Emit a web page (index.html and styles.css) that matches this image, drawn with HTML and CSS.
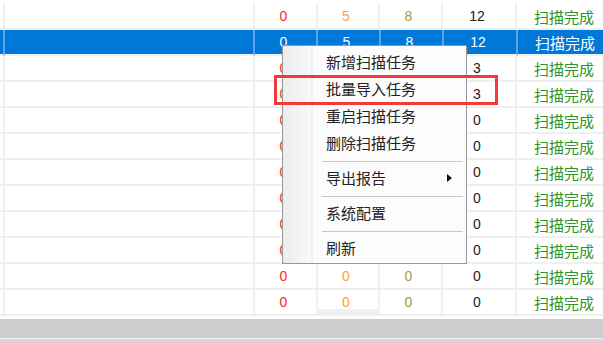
FILE: index.html
```html
<!DOCTYPE html>
<html lang="zh-CN">
<head>
    <meta charset="UTF-8">
    <title>扫描任务</title>
    <link rel="stylesheet" href="styles.css">
</head>
<body>

    <div class="grid">
        <div class="row">
            <div class="cell pre"></div><div class="cell name"></div>
            <div class="cell num red">0</div><div class="cell num orange">5</div><div class="cell num olive">8</div><div class="cell total">12</div>
            <div class="cell status">扫描完成</div>
        </div>
        <div class="row selected">
            <div class="cell pre"></div><div class="cell name"></div>
            <div class="cell num">0</div><div class="cell num">5</div><div class="cell num">8</div><div class="cell total">12</div>
            <div class="cell status">扫描完成</div>
        </div>
        <!-- rows under the context menu: middle columns are hidden -->
        <div class="row">
            <div class="cell pre"></div><div class="cell name"></div>
            <div class="cell num red">0</div><div class="cell num orange"></div><div class="cell num olive"></div><div class="cell total">3</div>
            <div class="cell status">扫描完成</div>
        </div>
        <div class="row">
            <div class="cell pre"></div><div class="cell name"></div>
            <div class="cell num red">0</div><div class="cell num orange"></div><div class="cell num olive"></div><div class="cell total">3</div>
            <div class="cell status">扫描完成</div>
        </div>
        <div class="row">
            <div class="cell pre"></div><div class="cell name"></div>
            <div class="cell num red">0</div><div class="cell num orange"></div><div class="cell num olive"></div><div class="cell total">0</div>
            <div class="cell status">扫描完成</div>
        </div>
        <div class="row">
            <div class="cell pre"></div><div class="cell name"></div>
            <div class="cell num red">0</div><div class="cell num orange"></div><div class="cell num olive"></div><div class="cell total">0</div>
            <div class="cell status">扫描完成</div>
        </div>
        <div class="row">
            <div class="cell pre"></div><div class="cell name"></div>
            <div class="cell num red">0</div><div class="cell num orange"></div><div class="cell num olive"></div><div class="cell total">0</div>
            <div class="cell status">扫描完成</div>
        </div>
        <div class="row">
            <div class="cell pre"></div><div class="cell name"></div>
            <div class="cell num red">0</div><div class="cell num orange"></div><div class="cell num olive"></div><div class="cell total">0</div>
            <div class="cell status">扫描完成</div>
        </div>
        <div class="row">
            <div class="cell pre"></div><div class="cell name"></div>
            <div class="cell num red">0</div><div class="cell num orange"></div><div class="cell num olive"></div><div class="cell total">0</div>
            <div class="cell status">扫描完成</div>
        </div>
        <div class="row">
            <div class="cell pre"></div><div class="cell name"></div>
            <div class="cell num red">0</div><div class="cell num orange"></div><div class="cell num olive"></div><div class="cell total">0</div>
            <div class="cell status">扫描完成</div>
        </div>
        <div class="row">
            <div class="cell pre"></div><div class="cell name"></div>
            <div class="cell num red">0</div><div class="cell num orange">0</div><div class="cell num olive">0</div><div class="cell total">0</div>
            <div class="cell status">扫描完成</div>
        </div>
        <div class="row">
            <div class="cell pre"></div><div class="cell name"></div>
            <div class="cell num red">0</div><div class="cell num orange done-bar">0</div><div class="cell num olive">0</div><div class="cell total">0</div>
            <div class="cell status">扫描完成</div>
        </div>
    </div>

    <div class="hscroll"></div>
    <div class="foot"></div>

    <div class="menu">
        <div class="menu-item">新增扫描任务</div>
        <div class="menu-item">批量导入任务</div>
        <div class="menu-item">重启扫描任务</div>
        <div class="menu-item">删除扫描任务</div>
        <div class="menu-sep"></div>
        <div class="menu-item has-sub">导出报告<span class="arrow"></span></div>
        <div class="menu-sep"></div>
        <div class="menu-item">系统配置</div>
        <div class="menu-sep"></div>
        <div class="menu-item">刷新</div>
    </div>

    <div class="mark"></div>

</body>
</html>
```

FILE: styles.css
```css
body {
    margin: 0;
    background-color: #ffffff;
    font-family: 'Liberation Sans', 'Noto Sans CJK SC', sans-serif;
    overflow: hidden;
    width: 603px;
    height: 341px;
    position: relative;
}

.grid {
    padding-top: 4px;
    width: 615px;
}

.row {
    display: flex;
    height: 26px;
}

.cell {
    box-sizing: border-box;
    height: 26px;
    border-right: 2px solid #f0f0f0;
    border-bottom: 2px solid #f0f0f0;
    display: flex;
    align-items: center;
    justify-content: center;
    padding-right: 4px;
    font-size: 14px;
    color: #222;
    flex-shrink: 0;
}

.pre {
    width: 5px;
    padding: 0;
}

.name {
    width: 250px;
}

.num {
    width: 63px;
}

.num.orange {
    width: 62px;
}

.total {
    width: 74px;
}

.status {
    width: 98px;
    font-family: 'Noto Sans CJK SC', sans-serif;
    font-size: 15px;
    color: #2a962a;
    padding-right: 2px;
}

.red {
    color: #ff2a2a;
}

.orange {
    color: #ffa040;
}

.olive {
    color: #a8993a;
}

.selected .cell {
    background-color: #0078d7;
    border-right-color: #5ea6e6;
    color: #ffffff;
}

.done-bar {
    background-image: linear-gradient(to top, #e8f4ec 5px, transparent 5px);
}

.hscroll {
    margin-top: 3px;
    height: 19px;
    background-color: #cdcdcd;
    border-bottom: 1px solid #f2f2f2;
}

.foot {
    height: 4px;
    background-color: #dadada;
}

/* context menu */
.menu {
    position: absolute;
    left: 282px;
    top: 45px;
    width: 185px;
    box-sizing: border-box;
    border: 1px solid #979797;
    padding: 2px 0;
    background: linear-gradient(to right, #ececec 0, #f9f9f9 28px, #e6e6e6 29px, #fcfcfc 30px);
    font-family: 'Noto Sans CJK SC', sans-serif;
    font-size: 15px;
    color: #222;
}

.menu-item {
    height: 27px;
    line-height: 27px;
    padding-left: 43px;
    padding-right: 14px;
    display: flex;
    align-items: center;
    justify-content: space-between;
}

.arrow {
    width: 0;
    height: 0;
    border-left: 5px solid #111;
    border-top: 4px solid transparent;
    border-bottom: 4px solid transparent;
}

.menu-sep {
    margin: 5px 3px 1px 39px;
    border-top: 1px solid #c8c8c8;
    border-bottom: 1px solid #ffffff;
}

/* annotation box */
.mark {
    position: absolute;
    left: 274px;
    top: 75px;
    width: 224px;
    height: 30px;
    box-sizing: border-box;
    border: 3px solid #f23a3a;
}
```
